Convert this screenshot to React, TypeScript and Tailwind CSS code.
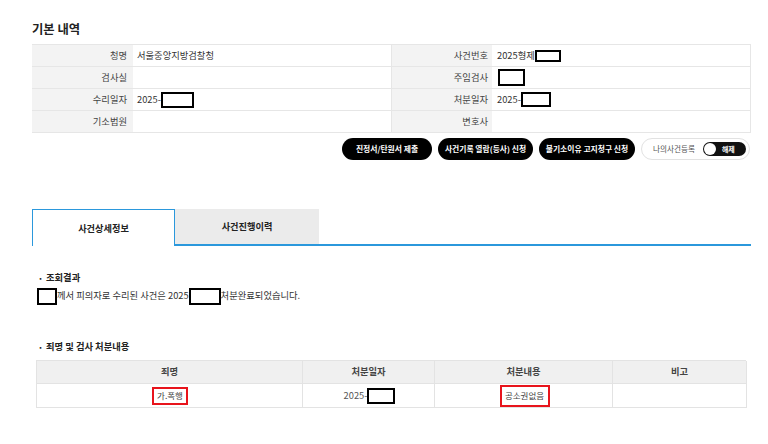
import React from 'react';

const font = "font-['Noto_Sans_CJK_KR','Noto_Sans',sans-serif]";

function Redact({ className }: { className: string }) {
    return <span className={`inline-block shrink-0 border-[2.5px] border-black bg-white ${className}`} />;
}

function InfoRow({ l1, v1, l2, v2 }: { l1: string; v1: React.ReactNode; l2: string; v2: React.ReactNode }) {
    return (
        <>
            <div className="flex h-[22px] items-center justify-end border-b border-[#e6e6e6] bg-[#f3f3f3] pr-[6px] text-[#444]">{l1}</div>
            <div className="flex h-[22px] items-center border-b border-[#e6e6e6] pl-[4px]">{v1}</div>
            <div className="flex h-[22px] items-center justify-end border-b border-l border-[#e6e6e6] bg-[#f3f3f3] pr-[4px] text-[#444]">{l2}</div>
            <div className="flex h-[22px] items-center border-b border-r border-[#e6e6e6] pl-[5px]">{v2}</div>
        </>
    );
}

export default function App() {
    return (
        <div className={`${font} h-[444px] w-[768px] overflow-hidden bg-white text-[#333]`}>
            <div className="ml-8 w-[719px] pt-[21px]">
                {/* 기본 내역 */}
                <h2 className="h-[17px] text-[12.3px] font-bold leading-[17px] text-[#222]">기본 내역</h2>

                <div className="mt-[6px] grid grid-cols-[101px_258px_101px_259px] border-t border-[#e6e6e6] text-[9.3px]">
                    <InfoRow
                        l1="청명"
                        v1="서울중앙지방검찰청"
                        l2="사건번호"
                        v2={
                            <span className="flex items-center">
                                2025형제
                                <Redact className="h-[12px] w-[26px]" />
                            </span>
                        }
                    />
                    <InfoRow l1="검사실" v1="" l2="주임검사" v2={<Redact className="ml-[1px] h-[17px] w-[27px]" />} />
                    <InfoRow
                        l1="수리일자"
                        v1={
                            <span className="flex items-center">
                                2025-
                                <Redact className="h-[16px] w-[33px]" />
                            </span>
                        }
                        l2="처분일자"
                        v2={
                            <span className="flex items-center">
                                2025-
                                <Redact className="h-[15px] w-[30px]" />
                            </span>
                        }
                    />
                    <InfoRow l1="기소법원" v1="" l2="변호사" v2="" />
                </div>

                {/* Action buttons */}
                <div className="mt-[5px] flex justify-end gap-[6px] pr-[1px]">
                    <button className="h-[22px] w-[90px] rounded-full bg-black text-[7.8px] font-bold text-white">진정서/탄원서 제출</button>
                    <button className="h-[22px] w-[95px] rounded-full bg-black text-[7.8px] font-bold text-white">사건기록 열람(등사) 신청</button>
                    <button className="h-[22px] w-[96px] rounded-full bg-black text-[7.8px] font-bold text-white">불기소이유 고지청구 신청</button>
                    <div className="flex h-[22px] w-[109px] items-center rounded-full border border-[#e2e2e2] pl-[11px]">
                        <span className="text-[7.6px] text-[#555]">나의사건등록</span>
                        <span className="ml-[8px] flex h-[14px] w-[43px] items-center rounded-full bg-[#111] pl-[1px]">
                            <span className="h-[12px] w-[12px] rounded-full bg-white" />
                            <span className="ml-[6px] text-[7px] font-bold text-white">해제</span>
                        </span>
                    </div>
                </div>

                {/* Tabs */}
                <div className="mt-[49px] flex h-[37px]">
                    <div className="flex w-[143px] items-center justify-center border-x border-t border-[#2b98dc] pt-[1px] text-[9.2px] font-bold text-[#222]">
                        사건상세정보
                    </div>
                    <div className="flex w-[144px] items-center justify-center border-b-2 border-[#2b98dc] bg-[#ebebeb] text-[9.2px] font-bold text-[#222]">
                        사건진행이력
                    </div>
                    <div className="flex-1 border-b-2 border-[#2b98dc]" />
                </div>

                {/* 조회결과 */}
                <div className="mt-[26px] px-[5px] text-[9.3px]">
                    <p className="flex h-[12px] items-center font-bold text-[#222]">
                        <span className="mr-[2px] text-[7px]">・</span>조회결과
                    </p>
                    <p className="mt-[3px] flex h-[18px] items-center text-[#333]">
                        <Redact className="h-[17px] w-[20px]" />
                        께서 피의자로 수리된 사건은 2025
                        <Redact className="h-[17px] w-[32px]" />
                        처분완료되었습니다.
                    </p>
                </div>

                {/* 죄명 및 검사 처분내용 */}
                <div className="mt-[36px] pl-[4px] pr-[5px] text-[9.3px]">
                    <p className="flex h-[12px] items-center pl-[1px] font-bold text-[#222]">
                        <span className="mr-[2px] text-[7px]">・</span>죄명 및 검사 처분내용
                    </p>
                    <div className="mt-[7px] grid grid-cols-[266px_132px_178px_134px] border-l border-t border-[#e3e3e3]">
                        <div className="flex h-[23px] items-center justify-center border-b border-r border-[#e3e3e3] bg-[#f0f0f0] font-semibold text-[#444]">죄명</div>
                        <div className="flex h-[23px] items-center justify-center border-b border-r border-[#e3e3e3] bg-[#f0f0f0] font-semibold text-[#444]">처분일자</div>
                        <div className="flex h-[23px] items-center justify-center border-b border-r border-[#e3e3e3] bg-[#f0f0f0] font-semibold text-[#444]">처분내용</div>
                        <div className="flex h-[23px] items-center justify-center border-b border-r border-[#e3e3e3] bg-[#f0f0f0] font-semibold text-[#444]">비고</div>

                        <div className="flex h-[24px] items-center justify-center border-b border-r border-[#e3e3e3] pl-[1px]">
                            <span className="flex h-[18px] w-[36px] items-center justify-center border-2 border-[#e8141c] text-[8.5px] text-[#444]">가.폭행</span>
                        </div>
                        <div className="flex h-[24px] items-center justify-center border-b border-r border-[#e3e3e3] pl-[2px] text-[#555]">
                            2025-
                            <Redact className="h-[16px] w-[28px]" />
                        </div>
                        <div className="flex h-[24px] items-center justify-center border-b border-r border-[#e3e3e3] pl-[2px]">
                            <span className="flex h-[22px] w-[50px] items-center justify-center border-2 border-[#e8141c] text-[8.5px] text-[#444]">공소권없음</span>
                        </div>
                        <div className="h-[24px] border-b border-r border-[#e3e3e3]" />
                    </div>
                </div>
            </div>
        </div>
    );
}
